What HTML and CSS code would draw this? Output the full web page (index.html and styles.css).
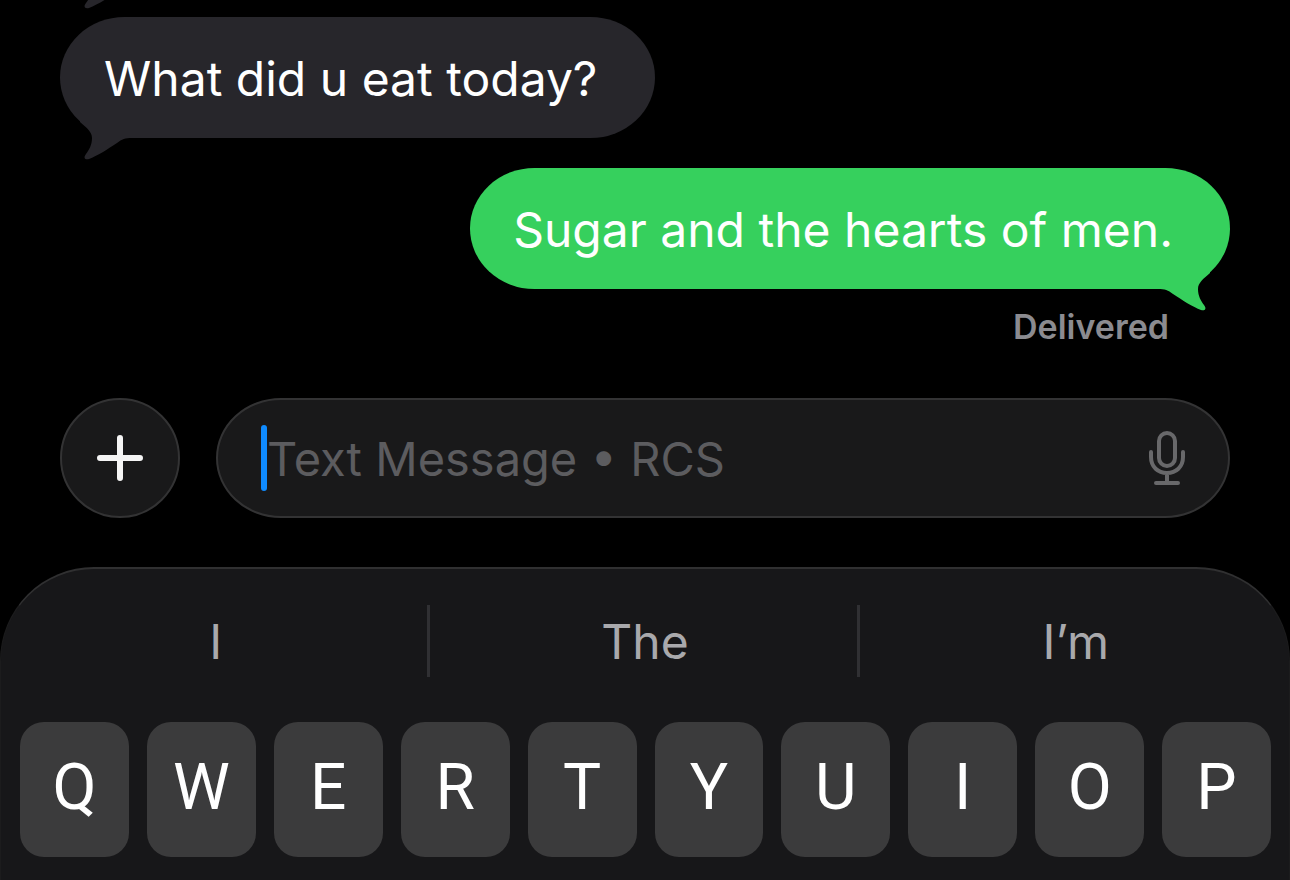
FILE: index.html
```html
<!DOCTYPE html>
<html lang="en">
<head>
    <meta charset="UTF-8">
    <title>Messages</title>
    <meta name="viewport" content="width=device-width, initial-scale=1.0">
    <link rel="stylesheet" href="styles.css">
</head>
<body>
    <svg class="defs" width="0" height="0" aria-hidden="true">
        <symbol id="tail" viewBox="20 101 52 42">
            <path d="M20 105 C27 111 32 115 32 121 C32 128 29 133 26 137 C23 141 25 143 29 142 C37 139 48 132 57 126 C62 122 65 121 72 121 L72 101 L20 101 Z"/>
        </symbol>
    </svg>

    <main class="thread">
        <div class="bubble received" aria-hidden="true">
            <svg class="tail"><use href="#tail"/></svg>
        </div>
        <div class="bubble received">
            What did u eat today?
            <svg class="tail" aria-hidden="true"><use href="#tail"/></svg>
        </div>
        <div class="bubble sent">
            Sugar and the hearts of men.
            <svg class="tail" aria-hidden="true"><use href="#tail"/></svg>
        </div>
        <div class="status">Delivered</div>
    </main>

    <form class="composer">
        <button type="button" class="add" aria-label="Add attachment">
            <svg width="48" height="48" viewBox="0 0 48 48"><path d="M24 4V44M4 24H44"/></svg>
        </button>
        <div class="field">
            <span class="caret"></span>
            <input type="text" placeholder="Text Message • RCS" aria-label="Text message">
            <button type="button" class="mic" aria-label="Dictate">
                <svg width="36" height="54" viewBox="0 0 36 54">
                    <rect x="10" y="2" width="16" height="33" rx="8"/>
                    <path d="M2 21V26C2 36 9 42 18 42S34 36 34 26V21M18 42V52M7 52H29"/>
                </svg>
            </button>
        </div>
    </form>

    <section class="keyboard" aria-label="Keyboard">
        <div class="suggestions">
            <button type="button">I</button>
            <button type="button">The</button>
            <button type="button">I’m</button>
        </div>
        <div class="keys">
            <button type="button">Q</button>
            <button type="button">W</button>
            <button type="button">E</button>
            <button type="button">R</button>
            <button type="button">T</button>
            <button type="button">Y</button>
            <button type="button">U</button>
            <button type="button">I</button>
            <button type="button">O</button>
            <button type="button">P</button>
        </div>
    </section>
</body>
</html>
```
FILE: styles.css
```css
* { box-sizing: border-box; }
body {
    margin: 0;
    height: 100vh;
    display: flex;
    flex-direction: column;
    background: #000;
    color: #fff;
    font-family: Inter, "Liberation Sans", sans-serif;
    font-size: 48px;
    overflow: hidden;
}
button, input {
    font: inherit;
    color: inherit;
    border: none;
    background: none;
    padding: 0;
    margin: 0;
}
.defs { position: absolute; }

/* conversation */
.thread {
    flex: 1;
    min-height: 0;
    display: flex;
    flex-direction: column;
    justify-content: flex-end;
    gap: 30px;
    padding: 0 60px 51px;
    overflow: hidden;
}
.bubble {
    position: relative;
    flex: none;
    min-width: 200px;
    height: 121px;
    padding: 0 58px 0 44px;
    line-height: 124px;
    border-radius: 65px / 61px;
    white-space: nowrap;
}
.received { align-self: flex-start; background: #27262b; color: #fff; }
.sent { align-self: flex-end; padding: 0 57px 0 43px; background: #36d05d; }
.tail {
    position: absolute;
    bottom: -22px;
    width: 52px;
    height: 42px;
}
.received .tail { left: 20px; fill: #27262b; }
.sent .tail { right: 20px; fill: #36d05d; transform: scaleX(-1); }
.status {
    align-self: flex-end;
    margin: -12px 61px 0 0;
    font-size: 34px;
    font-weight: 600;
    line-height: 40px;
    color: #8b8b90;
}

/* message box */
.composer {
    display: flex;
    gap: 36px;
    padding: 0 60px;
    margin: 0;
}
.add {
    flex: none;
    width: 120px;
    height: 120px;
    display: grid;
    place-items: center;
    border: 2px solid #333334;
    border-radius: 50%;
    background: #19191a;
}
.add svg { fill: none; stroke: #f5f5f5; stroke-width: 6; stroke-linecap: round; }
.field {
    flex: 1;
    display: flex;
    align-items: center;
    height: 120px;
    padding: 0 43px;
    border: 2px solid #333334;
    border-radius: 65px / 60px;
    background: #19191a;
}
.caret { flex: none; width: 6px; height: 66px; border-radius: 3px; background: #0f8bff; }
.field input { flex: 1; min-width: 0; height: 66px; font-size: 47px; outline: none; }
.field input::placeholder { color: #5c5c5f; opacity: 1; }
.mic { display: flex; }
.mic svg { fill: none; stroke: #68686a; stroke-width: 4; stroke-linecap: round; }

/* keyboard */
.keyboard {
    margin-top: 49px;
    padding: 36px 18px 23px 19px;
    border: solid;
    border-width: 2px 1px 0;
    border-color: #303031 #1c1c1d;
    border-radius: 94px 94px 0 0;
    background: #171719;
}
.suggestions {
    display: grid;
    grid-template-columns: repeat(3, 1fr);
    margin: 0 -18px 45px -19px;
}
.suggestions button { height: 72px; padding-left: 3px; line-height: 74px; color: #a9a9ac; }
.suggestions button:not(:last-child) { border-right: 3px solid #303033; }
.keys {
    display: grid;
    grid-template-columns: repeat(10, 1fr);
    gap: 18px;
}
.keys button {
    height: 135px;
    padding-bottom: 4px;
    border-radius: 24px;
    background: #3b3b3c;
    font-family: Roboto, Inter, sans-serif;
    font-size: 64px;
}
```
